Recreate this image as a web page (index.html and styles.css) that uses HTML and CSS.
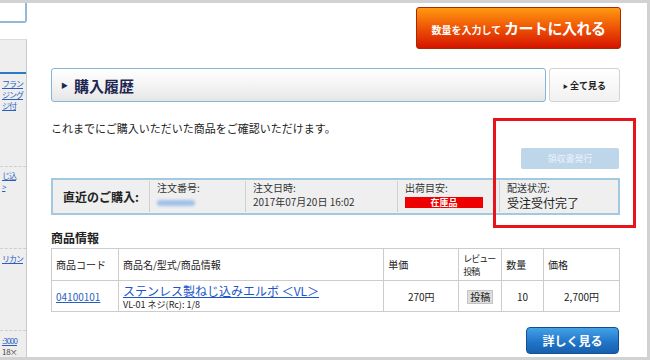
FILE: index.html
```html
<!DOCTYPE html>
<html lang="ja">
<head>
<meta charset="UTF-8">
<meta name="viewport" content="width=device-width, initial-scale=1.0">
<title>購入履歴</title>
<link rel="stylesheet" href="styles.css">
</head>
<body>

<div class="frame">
  <div class="sidebar">
    <div class="side-box"></div>
    <div class="side-panel">
      <div class="side-block first">
        <div class="side-line"></div>
        <a href="#">フラン</a>
        <a href="#">ジング</a>
        <a href="#">ジ付</a>
      </div>
      <div class="side-block second">
        <a href="#">じ込</a>
        <a href="#">&gt;</a>
      </div>
      <div class="side-block third">
        <a href="#">リカン</a>
      </div>
      <div class="side-block last">
        <a href="#">:3000</a>
        <span>1 8×</span>
      </div>
    </div>
  </div>

  <div class="main">
    <div class="cart-row">
      <button type="button" class="btn-cart"><small>数量を入力して</small> カートに入れる</button>
    </div>

    <div class="section-head">
      <div class="section-title"><span class="tri">▶</span>購入履歴</div>
      <a href="#" class="all-link"><span class="tri-s">▶</span>全て見る</a>
    </div>

    <p class="intro">これまでにご購入いただいた商品をご確認いただけます。</p>

    <div class="receipt-row">
      <button type="button" class="btn-receipt" disabled>領収書発行</button>
    </div>

    <div class="recent">
      <div class="cell head">直近のご購入:</div>
      <div class="cell"><span class="lbl">注文番号:</span><span class="blur"></span></div>
      <div class="cell"><span class="lbl">注文日時:</span><span class="val">2017年07月20日 16:02</span></div>
      <div class="cell"><span class="lbl">出荷目安:</span><span class="stock">在庫品</span></div>
      <div class="cell"><span class="lbl">配送状況:</span><span class="val big">受注受付完了</span></div>
    </div>

    <h2>商品情報</h2>
    <table class="items">
      <tr class="th-row">
        <th class="c-code">商品コード</th>
        <th class="c-name">商品名/型式/商品情報</th>
        <th class="c-price">単価</th>
        <th class="c-review">レビュー<br>投稿</th>
        <th class="c-qty">数量</th>
        <th class="c-total">価格</th>
      </tr>
      <tr>
        <td><a href="#" class="code">04100101</a></td>
        <td><a href="#" class="pname">ステンレス製ねじ込みエルボ ＜VL＞</a><span class="spec">VL-01 ネジ(Rc): 1/8</span></td>
        <td class="num">270円</td>
        <td class="num"><span class="post">投稿</span></td>
        <td class="num">10</td>
        <td class="num">2,700円</td>
      </tr>
    </table>

    <div class="more-row">
      <button type="button" class="btn-more">詳しく見る</button>
    </div>
  </div>

  <div class="highlight"></div>
</div>

</body>
</html>
```

FILE: styles.css
```css
body {
  margin: 0;
  font-family: "Noto Sans CJK JP", "Liberation Sans", sans-serif;
  color: #333;
  background: #fff;
}

.frame {
  position: relative;
  width: 650px;
  height: 360px;
  box-sizing: border-box;
  border: 3px solid #d2d2d2;
  border-left: none;
  display: flex;
  overflow: hidden;
}

/* left strip */
.sidebar {
  width: 27px;
  flex: none;
  display: flex;
  flex-direction: column;
}

.side-box {
  height: 18px;
  border-right: 2px solid #8fbbd9;
  border-bottom: 2px solid #8fbbd9;
  border-radius: 0 0 3px 0;
}

.side-panel {
  margin-top: 16px;
  flex: 1;
  background: #eeeeee;
  border-top: 1px solid #dcdcdc;
  border-right: 1px solid #c9c9c9;
  display: flex;
  flex-direction: column;
  overflow: hidden;
}

.side-block {
  display: flex;
  flex-direction: column;
  padding-left: 2px;
  border-bottom: 1px dashed #cfcfcf;
  font-size: 8px;
  line-height: 11px;
  letter-spacing: -1px;
  box-sizing: border-box;
}

.side-block a { color: #2a5fc0; white-space: nowrap; }
.side-block span { color: #444; }

.side-block.first { height: 127px; }
.side-block.second { height: 82px; padding-top: 3px; }
.side-block.third { height: 82px; padding-top: 4px; }
.side-block.last { border-bottom: none; padding-top: 4px; }

.side-line {
  height: 2px;
  background: #2f78c4;
  margin: 32px 0 4px -2px;
}

/* main column */
.main {
  width: 569px;
  margin-left: 24px;
  display: flex;
  flex-direction: column;
}

.cart-row {
  display: flex;
  justify-content: flex-end;
  padding-top: 4px;
}

.btn-cart {
  width: 205px;
  height: 42px;
  border: 1px solid #a42a00;
  border-radius: 3px;
  background: linear-gradient(#ff9a12, #f05a06 45%, #d61400);
  color: #fff;
  font-family: inherit;
  font-size: 15px;
  font-weight: bold;
  letter-spacing: -0.5px;
  padding: 0 0 2px 0;
  margin-right: -1px;
}

.btn-cart small {
  font-size: 10px;
  letter-spacing: 0;
}

.section-head {
  display: flex;
  gap: 3px;
  margin-top: 19px;
  height: 34px;
}

.section-title {
  flex: 1;
  display: flex;
  align-items: center;
  border: 1px solid #84b6d9;
  border-radius: 3px;
  background: linear-gradient(#ffffff, #f4f4f4 50%, #e6e6e6);
  font-size: 15px;
  font-weight: bold;
  color: #20254f;
  padding-left: 9px;
}

.tri {
  font-size: 7px;
  margin-right: 6px;
  color: #20254f;
}

.all-link {
  width: 69px;
  display: flex;
  align-items: center;
  justify-content: center;
  border: 1px solid #d2d2d2;
  border-radius: 3px;
  background: linear-gradient(#ffffff, #f1f1f1);
  color: #222;
  text-decoration: none;
  font-size: 9px;
  font-weight: bold;
}

.tri-s {
  font-size: 5px;
  margin-right: 2px;
}

.intro {
  margin: 18px 0 0;
  font-size: 11px;
  line-height: 16px;
  color: #222;
}

.receipt-row {
  display: flex;
  justify-content: flex-end;
  margin-top: 12px;
}

.btn-receipt {
  width: 98px;
  height: 21px;
  border: none;
  border-radius: 2px;
  background: #bdd6ea;
  color: #e9f2f9;
  font-family: inherit;
  font-size: 9px;
  margin-right: 1px;
}

.recent {
  margin-top: 9px;
  height: 37px;
  box-sizing: border-box;
  border: 2px solid #a3c8e2;
  background: #efefef;
  display: grid;
  grid-template-columns: 96px 96px 152px 102px 1fr;
}

.cell {
  display: flex;
  flex-direction: column;
  padding: 0 5px 0 7px;
  border-left: 1px solid #cfcfcf;
  margin: 1px 0;
  color: #333;
  white-space: nowrap;
}

.lbl {
  font-size: 10px;
  line-height: 14px;
}

.val {
  font-size: 10px;
  line-height: 14px;
}

.val.big {
  font-size: 12px;
  line-height: 17px;
  margin-top: -1px;
  color: #222;
}

.cell.head {
  border-left: none;
  font-size: 12px;
  font-weight: bold;
  flex-direction: row;
  align-items: center;
  padding: 0 0 0 10px;
  color: #222;
}

.blur {
  display: block;
  width: 38px;
  height: 6px;
  margin-top: 5px;
  border-radius: 3px;
  background: #9fc0ea;
  filter: blur(1.5px);
}

.stock {
  display: block;
  width: 78px;
  height: 11px;
  margin-top: 2px;
  background: #ee0000;
  color: #fff;
  font-weight: bold;
  font-size: 9px;
  line-height: 11px;
  text-align: center;
}

h2 {
  margin: 17px 0 4px;
  font-size: 12px;
  line-height: 12px;
  color: #222;
}

.items {
  border-collapse: collapse;
  width: 569px;
  font-size: 10px;
  color: #222;
}

.items th,
.items td {
  border: 1px solid #cccccc;
  padding: 0 4px;
  text-align: left;
  font-weight: normal;
}

.th-row { height: 32px; }
.items tr:last-child { height: 31px; }

.c-code { width: 58px; }
.c-name { width: 257px; }
.c-price { width: 66px; }
.c-review {
  width: 34px;
  line-height: 13px;
  font-size: 9px;
  letter-spacing: -1px;
  white-space: nowrap;
}
.c-qty { width: 33px; }
.c-total { width: 67px; }

.items td.num { text-align: center; }

.code {
  color: #2a5fc0;
  font-size: 10px;
}

.pname {
  display: block;
  color: #1d55c9;
  font-size: 12px;
  line-height: 17px;
}

.spec {
  display: block;
  font-size: 9px;
  line-height: 12px;
}

.post {
  display: inline-block;
  padding: 0 2px;
  background: #dedede;
  border: 1px solid #c4c4c4;
  font-size: 10px;
  line-height: 12px;
}

.more-row {
  display: flex;
  justify-content: flex-end;
  margin-top: 15px;
}

.btn-more {
  width: 93px;
  height: 27px;
  border: 1px solid #0f4f92;
  border-radius: 4px;
  background: linear-gradient(#44a2e6, #2176c9 55%, #1760ad);
  color: #fff;
  font-family: inherit;
  font-size: 12px;
  font-weight: bold;
  margin-right: 1px;
}

/* annotation overlay */
.highlight {
  position: absolute;
  left: 493px;
  top: 115px;
  width: 143px;
  height: 110px;
  box-sizing: border-box;
  border: 3px solid #e8141b;
}
```
